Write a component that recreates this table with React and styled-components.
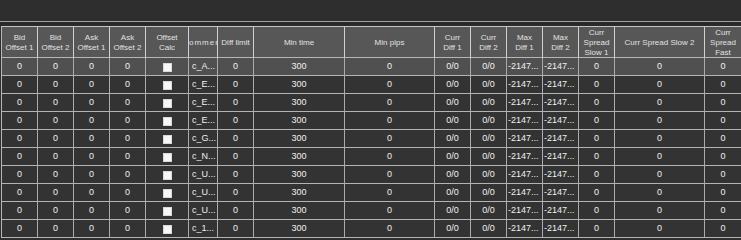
import React from "react";
import styled, { createGlobalStyle } from "styled-components";

const GlobalStyle = createGlobalStyle`
  html, body {
    margin: 0;
    padding: 0;
    background: #2e2e2e;
    overflow: hidden;
  }
  #root {
    width: 741px;
    height: 240px;
    overflow: hidden;
  }
`;

const COLS = [36, 36, 36, 36, 43, 29, 36, 91, 90, 36, 36, 36, 36, 36, 90, 37];

const HEADERS = [
  ["Bid", "Offset 1"],
  ["Bid", "Offset 2"],
  ["Ask", "Offset 1"],
  ["Ask", "Offset 2"],
  ["Offset", "Calc"],
  ["Comment"],
  ["Diff limit"],
  ["Min time"],
  ["Min pips"],
  ["Curr", "Diff 1"],
  ["Curr", "Diff 2"],
  ["Max", "Diff 1"],
  ["Max", "Diff 2"],
  ["Curr", "Spread", "Slow 1"],
  ["Curr Spread Slow 2"],
  ["Curr", "Spread", "Fast"],
];

const COMMENTS = ["c_A...", "c_E...", "c_E...", "c_E...", "c_G...", "c_N...", "c_U...", "c_U...", "c_U...", "c_1..."];

const Window = styled.div`
  width: 741px;
  height: 240px;
  display: flex;
  flex-direction: column;
  background: #2e2e2e;
  overflow: hidden;
`;

const TopBar = styled.div`
  height: 21px;
  flex: none;
  background: #2e2e2e;
`;

const Divider = styled.div`
  height: 4px;
  flex: none;
  border-top: 1px solid #a2a2a2;
  background: #2a2a2a;
`;

const Grid = styled.div`
  display: grid;
  grid-template-columns: ${COLS.map((w) => `${w}px`).join(" ")};
  margin-left: 1px;
  width: max-content;
  border-top: 1px solid #c6c6c6;
  border-left: 1px solid #b8b8b8;
  font-family: "Liberation Sans", Arial, sans-serif;
`;

const HeaderCell = styled.div`
  box-sizing: border-box;
  height: 31px;
  padding-top: 1px;
  background: #575757;
  border-right: 1px solid #d2d2d2;
  border-bottom: 1px solid #b6b6b6;
  display: flex;
  flex-direction: column;
  align-items: stretch;
  justify-content: center;
  overflow: hidden;
  color: #e2e2e2;
  font-size: 8px;
  line-height: 10px;
  white-space: nowrap;
`;

const HeaderLine = styled.span`
  display: block;
  margin: 0 -20px;
  text-align: center;
  letter-spacing: ${(p) => (p.$wide ? "1px" : "normal")};
`;

const Cell = styled.div`
  box-sizing: border-box;
  height: 18px;
  background: ${(p) => (p.$current ? "#505050" : "#333333")};
  border-right: 1px solid #ababab;
  border-bottom: 1px solid #b4b4b4;
  display: flex;
  align-items: center;
  justify-content: ${(p) => (p.$left ? "flex-start" : "center")};
  padding-left: ${(p) => (p.$left ? `${p.$pad}px` : "0")};
  overflow: hidden;
  white-space: nowrap;
  color: #f0f0f0;
  font-size: 9px;
  line-height: 17px;
`;

const Check = styled.span`
  box-sizing: border-box;
  width: 9px;
  height: 9px;
  margin-top: 1px;
  background: #f7f7f7;
  border: 1px solid #dadada;
`;

function Row({ index }) {
  const cur = index === 0;
  const values = ["0", "0", "0", "0"];
  return (
    <>
      {values.map((v, i) => (
        <Cell key={`a${i}`} $current={cur}>{v}</Cell>
      ))}
      <Cell $current={cur}><Check /></Cell>
      <Cell $current={cur} $left $pad={3}>{COMMENTS[index]}</Cell>
      <Cell $current={cur}>0</Cell>
      <Cell $current={cur}>300</Cell>
      <Cell $current={cur}>0</Cell>
      <Cell $current={cur}>0/0</Cell>
      <Cell $current={cur}>0/0</Cell>
      <Cell $current={cur} $left $pad={1}>-2147...</Cell>
      <Cell $current={cur} $left $pad={1}>-2147...</Cell>
      <Cell $current={cur}>0</Cell>
      <Cell $current={cur}>0</Cell>
      <Cell $current={cur}>0</Cell>
    </>
  );
}

export default function App() {
  return (
    <>
      <GlobalStyle />
      <Window>
        <TopBar />
        <Divider />
        <Grid>
          {HEADERS.map((lines, i) => (
            <HeaderCell key={i}>
              {lines.map((l, j) => (
                <HeaderLine key={j} $wide={l === "Comment"}>{l}</HeaderLine>
              ))}
            </HeaderCell>
          ))}
          {COMMENTS.map((_, i) => (
            <Row key={i} index={i} />
          ))}
        </Grid>
      </Window>
    </>
  );
}
